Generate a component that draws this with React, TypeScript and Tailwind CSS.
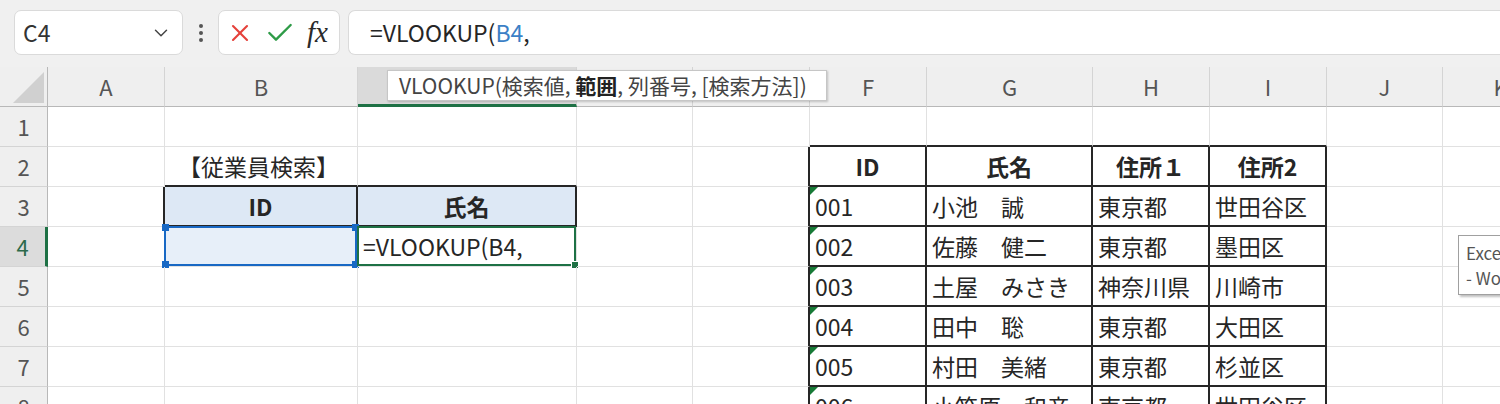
import { ChevronDown, X, Check } from "lucide-react";

const COLUMN_LABELS = ["", "A", "B", "C", "D", "E", "F", "G", "H", "I", "J", "K"];

// employee master shown in F2:I8
const employees = [
  ["001", "小池　誠", "東京都", "世田谷区"],
  ["002", "佐藤　健二", "東京都", "墨田区"],
  ["003", "土屋　みさき", "神奈川県", "川崎市"],
  ["004", "田中　聡", "東京都", "大田区"],
  ["005", "村田　美緒", "東京都", "杉並区"],
  ["006", "小笠原　和彦", "東京都", "世田谷区"],
];

const inTable = (r: number, c: number) => r >= 2 && r <= 8 && c >= 6 && c <= 9;

function rightDark(r: number, c: number) {
  if (inTable(r, c)) return true;
  if (c === 5 && r >= 2 && r <= 8) return true;
  if (r === 3 && c >= 1 && c <= 3) return true;
  return false;
}

function bottomDark(r: number, c: number) {
  if (inTable(r, c)) return true;
  if (r === 1 && c >= 6 && c <= 9) return true;
  if ((r === 2 || r === 3) && (c === 2 || c === 3)) return true;
  return false;
}

function Cell({ r, c }: { r: number; c: number }) {
  const border = [
    rightDark(r, c) ? "border-r-2 border-r-[#262626]" : "border-r border-r-[#e1e1e1]",
    bottomDark(r, c) ? "border-b-2 border-b-[#262626]" : "border-b border-b-[#e1e1e1]",
  ].join(" ");

  let content: React.ReactNode = null;
  let extra = "";

  if (r === 2 && c === 2) {
    content = <span className="pl-[13px] whitespace-nowrap">【従業員検索】</span>;
  }
  if (r === 3 && (c === 2 || c === 3)) {
    extra = "bg-[#dde8f5] justify-center font-bold";
    content = c === 2 ? "ID" : "氏名";
  }
  if (r === 4 && c === 2) {
    extra = "bg-[#e7eff9]";
    content = (
      <div className="absolute -left-[1px] -top-[1px] w-[calc(100%+1px)] h-[calc(100%+1px)] border-2 border-[#1868c4]">
        <div className="absolute -left-[4px] -top-[4px] w-[7px] h-[7px] bg-[#1868c4]" />
        <div className="absolute -right-[4px] -top-[4px] w-[7px] h-[7px] bg-[#1868c4]" />
        <div className="absolute -left-[4px] -bottom-[4px] w-[7px] h-[7px] bg-[#1868c4]" />
        <div className="absolute -right-[4px] -bottom-[4px] w-[7px] h-[7px] bg-[#1868c4]" />
      </div>
    );
  }
  if (r === 4 && c === 3) {
    content = (
      <>
        <span className="pl-[5px] whitespace-nowrap">=VLOOKUP(B4,</span>
        <div className="absolute -left-[1px] -top-[1px] w-[calc(100%+1px)] h-[calc(100%+1px)] border-2 border-[#1e7145]">
          <div className="absolute -right-[5px] -bottom-[5px] w-[8px] h-[8px] bg-[#1e7145] border border-white" />
        </div>
      </>
    );
  }
  if (inTable(r, c)) {
    const k = c - 6;
    if (r === 2) {
      extra = "justify-center font-bold";
      content = ["ID", "氏名", "住所１", "住所2"][k];
    } else {
      const row = employees[r - 3];
      content = (
        <>
          {k === 0 && (
            <div className="absolute left-0 top-0 w-0 h-0 border-t-[8px] border-t-[#177a36] border-r-[8px] border-r-transparent" />
          )}
          <span className="pl-[5px] whitespace-nowrap">{row[k]}</span>
        </>
      );
    }
  }

  return (
    <div className={`relative h-[40px] flex items-center text-[23px] text-[#262626] ${border} ${extra}`}>
      {content}
    </div>
  );
}

function RowHeader({ r }: { r: number }) {
  const active = r === 4;
  return (
    <div
      className={`h-[40px] flex items-center justify-center text-[22px] border-b border-b-[#d4d4d4] ${
        active
          ? "bg-[#dcdcdc] border-r-[3px] border-r-[#1e7145] text-[#2c6a4b]"
          : "bg-[#efefef] border-r border-r-[#b8b8b8] text-[#555]"
      }`}
    >
      {r}
    </div>
  );
}

function ColumnHeader({ c }: { c: number }) {
  if (c === 0) {
    return (
      <div className="h-[40px] bg-[#efefef] border-r border-r-[#b8b8b8] border-b border-b-[#b8b8b8] relative">
        <svg className="absolute left-[13px] top-[5px]" width="31" height="31" viewBox="0 0 31 31">
          <polygon points="31,0 31,31 0,31" fill="#d0d0d0" />
        </svg>
      </div>
    );
  }
  const active = c === 3;
  return (
    <div
      className={`h-[40px] flex items-center justify-center text-[22px] border-r border-r-[#d4d4d4] ${
        active
          ? "bg-[#dadada] border-b-[3px] border-b-[#1e7145] text-[#2c6a4b]"
          : "bg-[#efefef] border-b border-b-[#b8b8b8] text-[#555]"
      }`}
    >
      {COLUMN_LABELS[c]}
    </div>
  );
}

function FormulaBar() {
  return (
    <div className="h-[67px] bg-[#f0f0f0] flex items-start pt-[10px] pl-[14px]">
      <div className="w-[169px] h-[45px] bg-white rounded-[7px] border border-[#dadada] flex items-center justify-between pl-[8px] pr-[10px]">
        <span className="text-[23px] text-[#333]">C4</span>
        <ChevronDown size={22} strokeWidth={1.6} className="text-[#444]" />
      </div>
      <div className="w-[35px] h-[45px] flex flex-col items-center justify-center gap-[3px]">
        <div className="w-[4px] h-[4px] rounded-full bg-[#555]" />
        <div className="w-[4px] h-[4px] rounded-full bg-[#555]" />
        <div className="w-[4px] h-[4px] rounded-full bg-[#555]" />
      </div>
      <div className="w-[122px] h-[45px] bg-white rounded-[7px] border border-[#dadada] flex items-center pl-[7px]">
        <X size={28} strokeWidth={1.8} className="text-[#e5413b]" />
        <Check size={32} strokeWidth={1.8} className="text-[#2e9b47] ml-[10px]" />
        <span className="ml-[11px] text-[29px] italic text-[#2a2a2a] font-['Liberation_Serif',serif] leading-none">
          fx
        </span>
      </div>
      <div className="ml-[8px] flex-1 h-[45px] bg-white rounded-l-[7px] border border-r-0 border-[#dadada] flex items-center pl-[21px] text-[23px] text-[#262626]">
        =VLOOKUP(<span className="text-[#3b7fc6]">B4</span>,
      </div>
    </div>
  );
}

export default function App() {
  const rows = [1, 2, 3, 4, 5, 6, 7, 8];
  const cols = [1, 2, 3, 4, 5, 6, 7, 8, 9, 10, 11];

  return (
    <div className="w-[1500px] h-[404px] overflow-hidden bg-white relative font-['Noto_Sans_CJK_JP',sans-serif]">
      <FormulaBar />

      <div className="grid grid-cols-[48px_117px_193px_219px_116px_117px_117px_166px_117px_117px_116px_116px] w-[1560px]">
        <ColumnHeader c={0} />
        {cols.map((c) => (
          <ColumnHeader key={c} c={c} />
        ))}
        {rows.map((r) => (
          <div key={r} className="contents">
            <RowHeader r={r} />
            {cols.map((c) => (
              <Cell key={c} r={r} c={c} />
            ))}
          </div>
        ))}
      </div>

      {/* function argument hint */}
      <div className="absolute left-[387px] top-[70px] w-[440px] h-[31px] pl-[11px] bg-white border border-[#c6c6c6] shadow-[1px_1px_2px_rgba(0,0,0,0.2)] flex items-center text-[21px] text-[#444] whitespace-nowrap">
        VLOOKUP(検索値,&nbsp;<b className="text-[#222]">範囲</b>,&nbsp;列番号,&nbsp;[検索方法])
      </div>

      {/* autocomplete tooltip, cut off at the right edge */}
      <div className="absolute left-[1458px] top-[235px] w-[100px] h-[60px] bg-white border border-[#a0a0a0] shadow-[2px_2px_2px_rgba(0,0,0,0.25)] pl-[7px] pt-[4px] text-[17px] leading-[25px] text-[#555] whitespace-nowrap">
        <div>Excel</div>
        <div>- Word</div>
      </div>
    </div>
  );
}
